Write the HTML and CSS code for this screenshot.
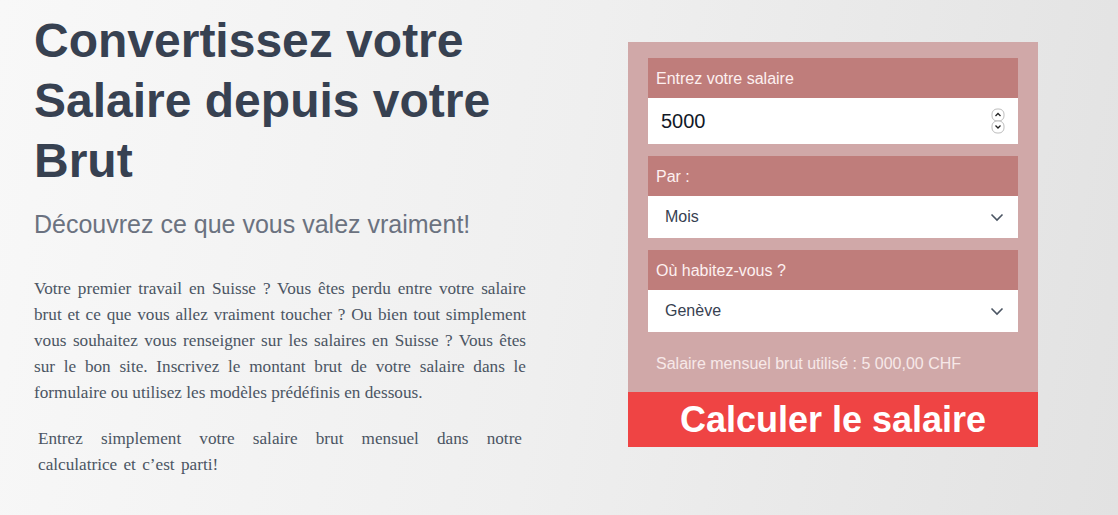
FILE: index.html
```html
<!DOCTYPE html>
<html lang="fr">
<head>
<meta charset="utf-8">
<title>Convertissez votre Salaire</title>
<link rel="stylesheet" href="styles.css">
</head>
<body>
<main class="page">
  <section class="intro">
    <h1 class="title">Convertissez votre Salaire depuis votre Brut</h1>
    <p class="subtitle">Découvrez ce que vous valez vraiment!</p>
    <p class="text">Votre premier travail en Suisse ? Vous êtes perdu entre votre salaire brut et ce que vous allez vraiment toucher ? Ou bien tout simplement vous souhaitez vous renseigner sur les salaires en Suisse ? Vous êtes sur le bon site. Inscrivez le montant brut de votre salaire dans le formulaire ou utilisez les modèles prédéfinis en dessous.</p>
    <p class="text text-indent">Entrez simplement votre salaire brut mensuel dans notre calculatrice et c’est parti!</p>
  </section>
  <form class="calc">
    <div class="fields">
      <div class="field">
        <div class="label">Entrez votre salaire</div>
        <div class="control control-number">
          <span class="value-num">5000</span>
          <svg class="spin" width="14" height="26" viewBox="0 0 14 26">
            <rect x="1" y="1" width="12" height="12" rx="5" fill="#fff" stroke="#bdbdbd"/>
            <rect x="1" y="13" width="12" height="12" rx="5" fill="#fff" stroke="#bdbdbd"/>
            <path d="M4.5 8 L7 5.5 L9.5 8" fill="none" stroke="#222" stroke-width="1.3"/>
            <path d="M4.5 17.5 L7 20 L9.5 17.5" fill="none" stroke="#222" stroke-width="1.3"/>
          </svg>
        </div>
      </div>
      <div class="field">
        <div class="label">Par :</div>
        <div class="control control-select">
          <span class="value-sel">Mois</span>
          <svg class="chev" width="14" height="9" viewBox="0 0 14 9"><path d="M1.5 1.5 L7 7 L12.5 1.5" fill="none" stroke="#4b5563" stroke-width="1.6"/></svg>
        </div>
      </div>
      <div class="field">
        <div class="label">Où habitez-vous ?</div>
        <div class="control control-select">
          <span class="value-sel">Genève</span>
          <svg class="chev" width="14" height="9" viewBox="0 0 14 9"><path d="M1.5 1.5 L7 7 L12.5 1.5" fill="none" stroke="#4b5563" stroke-width="1.6"/></svg>
        </div>
      </div>
      <p class="used">Salaire mensuel brut utilisé : 5 000,00 CHF</p>
    </div>
    <button type="button" class="submit">Calculer le salaire</button>
  </form>
</main>
</body>
</html>
```
FILE: styles.css
```css
html, body {
  margin: 0;
  padding: 0;
}
body {
  width: 1118px;
  height: 515px;
  overflow: hidden;
  background: linear-gradient(100deg, #f8f8f8 0%, #efefef 50%, #e2e2e2 100%);
  font-family: "Liberation Sans", Arial, sans-serif;
}
.page {
  display: flex;
  align-items: flex-start;
  padding-left: 34px;
}
.intro {
  width: 492px;
  flex: none;
}
.title {
  margin: 11px 0 0;
  font-size: 48px;
  line-height: 60px;
  font-weight: 700;
  color: #374151;
}
.subtitle {
  margin: 17px 0 0;
  font-size: 25px;
  line-height: 32px;
  color: #6b7280;
}
.text {
  margin: 36px 0 0;
  font-family: "Liberation Serif", "Times New Roman", serif;
  font-size: 17.2px;
  line-height: 26px;
  color: #4b5563;
  text-align: justify;
}
.text-indent {
  margin-top: 20px;
  padding: 0 4px;
  word-spacing: 2px;
}
.calc {
  flex: none;
  width: 410px;
  margin: 42px 0 0 102px;
  background: #d0a8a8;
}
.fields {
  padding: 16px 20px 0;
  display: flex;
  flex-direction: column;
  gap: 12px;
}
.label {
  height: 40px;
  box-sizing: border-box;
  padding: 1px 0 0 8px;
  display: flex;
  align-items: center;
  background: #bf7d7b;
  color: #fdf0f0;
  font-size: 16px;
}
.control {
  background: #fff;
  display: flex;
  align-items: center;
  justify-content: space-between;
}
.control-number {
  height: 46px;
  padding: 0 13px 0 13px;
}
.value-num {
  font-size: 20px;
  color: #111827;
}
.spin {
  display: block;
}
.control-select {
  height: 42px;
  padding: 0 14px 0 17px;
}
.value-sel {
  font-size: 16px;
  color: #374151;
}
.chev {
  display: block;
}
.used {
  margin: 0;
  padding: 0 8px 8px;
  line-height: 40px;
  font-size: 16px;
  color: #f7e8e8;
}
.submit {
  display: block;
  width: 100%;
  height: 55px;
  border: 0;
  padding: 0;
  margin: 0;
  background: #ef4444;
  color: #fff;
  font-family: "Liberation Sans", Arial, sans-serif;
  font-size: 36px;
  font-weight: 700;
}
```
